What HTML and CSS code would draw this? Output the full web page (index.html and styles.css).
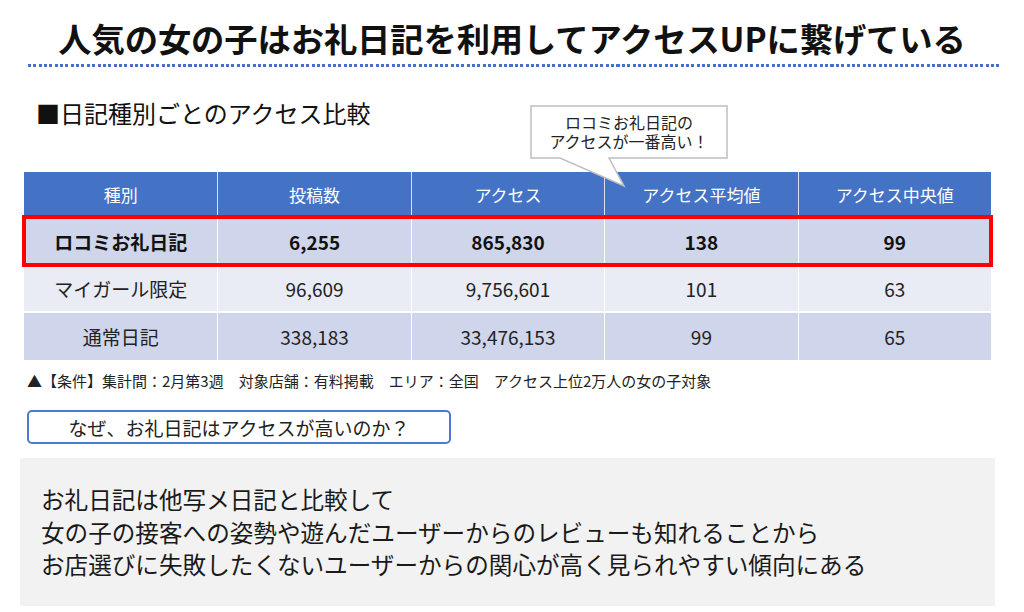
FILE: index.html
```html
<!DOCTYPE html>
<html lang="ja">
<head>
<meta charset="utf-8">
<title>お礼日記</title>
<link rel="stylesheet" href="styles.css">
</head>
<body>
<div class="page">
  <h1 class="title">人気の女の子はお礼日記を利用してアクセスUPに繋げている</h1>
  <div class="dots"></div>
  <div class="compare">
    <h2 class="subtitle">■日記種別ごとのアクセス比較</h2>
    <div class="callout">
      <svg class="callout-shape" width="200" height="84" viewBox="0 0 200 84">
        <path d="M1,1 H197 V53 H79 L94,81 L30,53 H1 Z" fill="#ffffff" stroke="#bfbfbf" stroke-width="1.5" stroke-linejoin="miter"/>
      </svg>
      <div class="callout-text">ロコミお礼日記の<br>アクセスが一番高い！</div>
    </div>
    <div class="table">
      <div class="row head">
        <div class="cell">種別</div>
        <div class="cell">投稿数</div>
        <div class="cell">アクセス</div>
        <div class="cell">アクセス平均値</div>
        <div class="cell">アクセス中央値</div>
      </div>
      <div class="row dark hl">
        <div class="cell">ロコミお礼日記</div>
        <div class="cell">6,255</div>
        <div class="cell">865,830</div>
        <div class="cell">138</div>
        <div class="cell">99</div>
      </div>
      <div class="row light">
        <div class="cell">マイガール限定</div>
        <div class="cell">96,609</div>
        <div class="cell">9,756,601</div>
        <div class="cell">101</div>
        <div class="cell">63</div>
      </div>
      <div class="row dark last">
        <div class="cell">通常日記</div>
        <div class="cell">338,183</div>
        <div class="cell">33,476,153</div>
        <div class="cell">99</div>
        <div class="cell">65</div>
      </div>
    </div>
  </div>
  <p class="note">▲【条件】集計間：2月第3週　対象店舗：有料掲載　エリア：全国　アクセス上位2万人の女の子対象</p>
  <div class="why">なぜ、お礼日記はアクセスが高いのか？</div>
  <div class="panel">
    <p>お礼日記は他写メ日記と比較して</p>
    <p>女の子の接客への姿勢や遊んだユーザーからのレビューも知れることから</p>
    <p>お店選びに失敗したくないユーザーからの関心が高く見られやすい傾向にある</p>
  </div>
</div>
</body>
</html>
```

FILE: styles.css
```css
* { box-sizing: border-box; }
html, body { margin: 0; padding: 0; background: #ffffff; }
body {
  font-family: "Noto Sans CJK JP", "Noto Sans", sans-serif;
  color: #1a1a1a;
  width: 1024px;
  height: 612px;
  overflow: hidden;
}
.page { display: flex; flex-direction: column; }
.title {
  margin: 18px 0 0;
  font-size: 33.3px;
  line-height: 40px;
  font-weight: 700;
  text-align: center;
  color: #111;
  letter-spacing: -0.1px;
}
.dots {
  margin: 6px 24px 0 28px;
  height: 3px;
  background: repeating-linear-gradient(90deg, #4472c4 0 3px, transparent 3px 5.35px);
}
.compare { position: relative; }
.subtitle {
  width: max-content;
  margin: 31px 0 0 36px;
  font-size: 24px;
  line-height: 30px;
  font-weight: 400;
  color: #111;
}
.callout {
  position: absolute;
  left: 530px;
  top: 38px;
  width: 200px;
  height: 84px;
  z-index: 3;
}
.callout-shape { position: absolute; left: 0; top: 0; }
.callout-text {
  position: absolute;
  left: 0;
  top: 8px;
  width: 198px;
  text-align: center;
  font-size: 16px;
  line-height: 19px;
  color: #222;
}
.table {
  margin: 44px 0 0 24px;
  width: 967px;
  display: flex;
  flex-direction: column;
}
.row {
  display: grid;
  grid-template-columns: repeat(5, 1fr);
  border-bottom: 2px solid #ffffff;
}
.row.last { border-bottom: 0; }
.cell {
  display: flex;
  align-items: center;
  justify-content: center;
  border-left: 1px solid #ffffff;
  font-size: 19px;
  color: #222;
}
.cell:first-child { border-left: 0; }
.head { height: 45px; background: #4472c4; border-bottom: 0; }
.head .cell { color: #ffffff; font-size: 17px; border-left-color: #d9e1f2; }
.dark { background: #cfd5ea; }
.light { background: #e9ebf5; }
.hl {
  height: 48px;
  position: relative;
  z-index: 2;
  outline: 4px solid #ff0000;
  outline-offset: -2px;
  border-bottom: 0;
}
.hl .cell { font-weight: 700; color: #111; font-size: 19px; }
.light { height: 48px; }
.dark.last { height: 47px; }
.note {
  margin: 10px 0 0 27px;
  font-size: 15px;
  line-height: 22px;
  color: #222;
}
.why {
  margin: 18px 0 0 27px;
  width: 424px;
  height: 34px;
  border: 2px solid #4a7bd0;
  border-radius: 5px;
  display: flex;
  align-items: center;
  justify-content: center;
  font-size: 19px;
  color: #222;
}
.panel {
  margin: 14px 0 0 20px;
  width: 975px;
  height: 148px;
  background: #f2f2f2;
  padding: 25px 0 0 21px;
}
.panel p {
  margin: 0;
  font-size: 23.6px;
  line-height: 32.5px;
  color: #1a1a1a;
}
```
